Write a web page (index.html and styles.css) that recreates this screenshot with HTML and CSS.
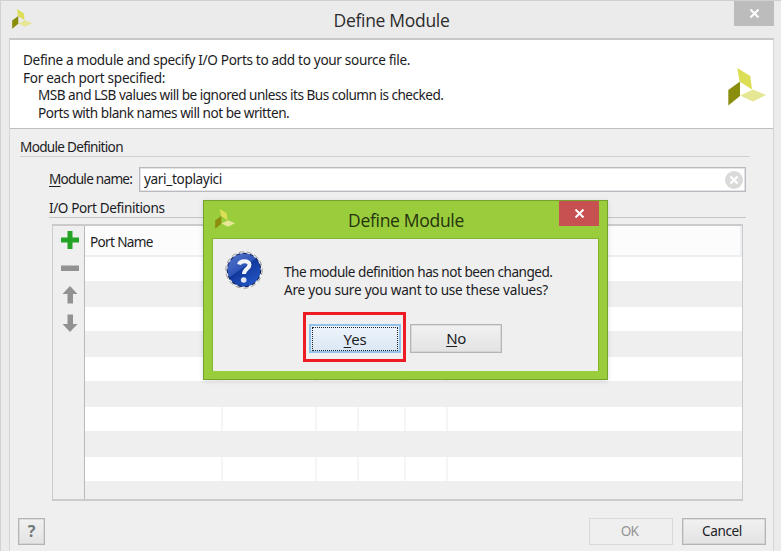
FILE: index.html
```
<!DOCTYPE html>
<html lang="en">
<head>
<meta charset="utf-8">
<title>Define Module</title>
<link rel="stylesheet" href="styles.css">
</head>
<body>
<svg width="0" height="0" class="defs" aria-hidden="true">
  <symbol id="logo" viewBox="0 0 38 38">
    <path fill="#dcdf55" d="M9.300 0 22.300 8 24 21.500 11.500 13.500Z"/>
    <path fill="#8b8d0d" d="M.3 22 12 13.500V28L.3 37.500Z"/>
    <path fill="#e5e794" d="M12 27.500 25 21.500 38 27 25 33.500Z"/>
  </symbol>
</svg>
<div class="window">
  <header class="titlebar">
    <svg class="app-icon"><use href="#logo"/></svg>
    <h1>Define Module</h1>
    <button class="close"><svg viewBox="0 0 11 9"><path d="M1.500.5 9.500 8.500M9.500.5 1.500 8.500"/></svg></button>
  </header>
  <main class="content">
    <section class="intro">
      <div class="intro-text">
        <p class="l1">Define a module and specify I/O Ports to add to your source file.</p>
        <p class="l2">For each port specified:</p>
        <p class="l3 indent">MSB and LSB values will be ignored unless its Bus column is checked.</p>
        <p class="l4 indent">Ports with blank names will not be written.</p>
      </div>
      <svg class="brand"><use href="#logo"/></svg>
    </section>
    <section class="definition">
      <h2>Module Definition</h2>
      <div class="name-row">
        <label><u>M</u>odule name:</label>
        <div class="input"><span>yari_toplayici</span>
          <svg viewBox="0 0 18 18"><circle cx="9" cy="9" r="9" fill="#dadada"/><path d="M5.500 5.500l7 7M12.500 5.500l-7 7" stroke="#fff" stroke-width="2.200"/></svg>
        </div>
      </div>
      <h3>I/O Port Definitions</h3>
      <div class="ports">
        <div class="tools">
          <svg viewBox="0 0 18 18"><path fill="#24a324" d="M6.500 0h5v6.500H18v5h-6.500V18h-5v-6.500H0v-5h6.500Z"/></svg>
          <svg viewBox="0 0 18 18"><path fill="#929292" d="M0 6.500h18v5.500H0Z"/></svg>
          <svg viewBox="0 0 18 18"><path fill="#929292" d="M9 0 16.500 8H12v9.500H6.500V8h-5Z"/></svg>
          <svg viewBox="0 0 18 18"><path fill="#929292" d="M9 18 16.500 10H12V.5H6.500V10h-5Z"/></svg>
        </div>
        <div class="table">
          <div class="thead">Port Name</div>
          <div class="row odd"><i></i><i></i><i></i><i></i><i></i><i></i></div><div class="row"></div>
          <div class="row odd"><i></i><i></i><i></i><i></i><i></i><i></i></div><div class="row"></div>
          <div class="row odd"><i></i><i></i><i></i><i></i><i></i><i></i></div><div class="row"></div>
          <div class="row odd"><i></i><i></i><i></i><i></i><i></i><i></i></div><div class="row"></div>
          <div class="row odd"><i></i><i></i><i></i><i></i><i></i><i></i></div><div class="row"></div>
        </div>
      </div>
    </section>
    <footer class="actions">
      <button class="help">?</button>
      <button class="ok" disabled>OK</button>
      <button class="cancel">Cancel</button>
    </footer>
  </main>
</div>
<div class="dialog">
  <header class="dialog-title">
    <svg class="app-icon"><use href="#logo"/></svg>
    <h1>Define Module</h1>
    <button class="close"><svg viewBox="0 0 11 9"><path d="M1.500.5 9.500 8.500M9.500.5 1.500 8.500"/></svg></button>
  </header>
  <div class="dialog-body">
    <div class="message">
      <svg class="question" viewBox="0 0 38 38">
        <defs><linearGradient id="ball" x1="0" y1="0" x2=".7" y2="1"><stop offset="0" stop-color="#5a78cc"/><stop offset=".5" stop-color="#2e55b8"/><stop offset=".52" stop-color="#11389c"/><stop offset="1" stop-color="#2356c4"/></linearGradient></defs>
        <circle cx="19" cy="19" r="18.200" fill="#f4f4f4" stroke="#999" stroke-width="1" stroke-dasharray="5 3"/>
        <circle cx="19" cy="19" r="16.700" fill="url(#ball)" stroke="#172b66" stroke-width="1.200" stroke-dasharray="4 3"/>
        <path d="M14 13.500c1-4 10.500-4.500 10.500.3 0 4-5.500 4-5.500 9.200" fill="none" stroke="#f3f4fa" stroke-width="4"/>
        <circle cx="18.700" cy="29" r="2.800" fill="#e1e6f5"/>
      </svg>
      <div class="message-text">
        <p class="m1">The module definition has not been changed.</p>
        <p class="m2">Are you sure you want to use these values?</p>
      </div>
    </div>
    <div class="choices">
      <div class="highlight"><button class="yes"><span><u>Y</u>es</span></button></div>
      <button class="no"><u>N</u>o</button>
    </div>
  </div>
</div>
</body>
</html>
```
FILE: styles.css
```
* { box-sizing: border-box; }
body {
  margin: 0;
  width: 781px;
  height: 551px;
  overflow: hidden;
  font: 13.6px/17.5px "Noto Sans", sans-serif;
  color: #1c1c24;
}
.defs { position: absolute; }
p, h1, h2, h3 { margin: 0; font-weight: 400; font-size: inherit; }
button { padding: 0; font: inherit; color: inherit; border-radius: 0; }
svg { display: block; flex: none; }
u { text-decoration-thickness: 1px; text-underline-offset: 2px; text-decoration-skip-ink: none; }

.window {
  height: 551px;
  padding: 0 7px 0 8px;
  background: #ebebeb;
  border-top: 1px solid #d0d0d0;
  border-left: 1px solid #d0d0d0;
}
.titlebar { display: flex; height: 37px; }
.titlebar .app-icon { width: 20px; height: 20px; margin: 8px 0 0 3px; }
h1 {
  flex: 1;
  text-align: center;
  font: 17.5px/38px "Open Sans", sans-serif;
  letter-spacing: -0.3px;
  color: #2b2b2b;
}
.titlebar h1 { padding-left: 17px; }
.close {
  width: 40px;
  height: 25px;
  border: 0;
  background: #bcbcbc;
  display: grid;
  place-items: center;
}
.close svg { width: 11px; height: 9px; stroke: #fff; stroke-width: 2; }

.content {
  height: 513px;
  border: 1px solid #d6d6d6;
  border-top: 2px solid #c8c8c8;
  border-bottom: 0;
  background: #efefef;
}
.intro {
  display: flex;
  justify-content: space-between;
  height: 89px;
  padding: 11px 7px 0 13px;
  background: #fff;
  border-bottom: 1px solid #bebebe;
}
.brand { width: 38px; height: 38px; margin-top: 17px; }
.indent { padding-left: 15px; }
.l1 { letter-spacing: -0.33px; }
.l2 { letter-spacing: -0.3px; }
.l3 { letter-spacing: -0.51px; }
.l4 { letter-spacing: -0.48px; }

.definition { padding: 9px 23px 0 11px; }
h2 {
  height: 19px;
  margin-left: -1px;
  letter-spacing: -0.7px;
  border-bottom: 1px solid #d0d0d0;
}
.name-row { display: flex; height: 25px; margin: 10px 4px 0 28px; line-height: 24px; }
.name-row label { width: 90px; letter-spacing: -0.74px; }
.input {
  flex: 1;
  display: flex;
  align-items: center;
  justify-content: space-between;
  padding: 0 2px 0 4px;
  border: 1px solid #b9b9bf;
  box-shadow: inset 0 0 0 .5px #c9c9cf;
  background: #fff;
  letter-spacing: -0.35px;
}
.input span { margin-top: -1px; }
.input svg { width: 18px; height: 18px; }
h3 {
  height: 19px;
  margin: 7px 4px 0 28px;
  letter-spacing: -0.4px;
  border-bottom: 1px solid #c4c4c4;
}
.ports {
  display: flex;
  height: 277px;
  margin: 6px 7px 0 31px;
  border: 2px solid #cbcbcb;
  border-left-width: 1px;
  border-right-width: 1px;
}
.tools {
  width: 32px;
  padding: 5px 0 0 8px;
  display: flex;
  flex-direction: column;
  gap: 9.500px;
  border-right: 1px solid #b9b9b9;
}
.tools svg { width: 18px; height: 18px; }
.table { flex: 1; overflow: hidden; background: #efefef; }
.thead {
  height: 31px;
  padding: 0 5px;
  line-height: 31px;
  letter-spacing: -0.67px;
  background: #fcfcfc;
  border-right: 2px solid #ebeff4;
  border-bottom: 2px solid #ebeff4;
}
.row { height: 26px; }
.row.odd {
  height: 24px;
  display: grid;
  grid-template-columns: 138px 94px 42px 47px 42px 1fr;
  background: #fff;
}
.row i { border-right: 2px solid #f5f5f5; }
.row i:last-child { border: 0; }

.actions { display: flex; padding: 17px 7px 0 8px; }
.actions button {
  height: 27px;
  border: 1px solid #b4b4b4;
  box-shadow: inset 0 0 0 .5px #c8c8c8;
  background: linear-gradient(#f1f1f1, #e3e3e3);
  line-height: 24px;
  padding-bottom: 1px;
}
.actions .help { width: 27px; margin-right: auto; font-weight: 700; font-size: 16px; color: #6d7b7b; }
.actions .ok {
  width: 84px;
  margin-right: 9px;
  padding-right: 3px;
  letter-spacing: -0.7px;
  color: #969696;
  border-color: #d9d9d9;
  box-shadow: none;
  background: #efefef;
}
.actions .cancel { width: 84px; padding-right: 4px; letter-spacing: -0.4px; }

.dialog {
  position: absolute;
  left: 203px;
  top: 200px;
  width: 405px;
  height: 180px;
  padding: 0 8px;
  border: 1px solid #76a12c;
  background: #9acd3c;
  box-shadow: 0 1px 5px rgba(0, 0, 0, .13);
}
.dialog-title { display: flex; height: 37px; }
.dialog-title .app-icon { width: 20px; height: 20px; margin: 8px 0 0 3px; }
.dialog-title h1 { padding-left: 18px; color: #26330f; }
.dialog-title .close { background: #c75050; }
.dialog-body {
  height: 133px;
  border: 1px solid #83b52e;
  border-bottom: 0;
  background: #efefef;
}
.message { display: flex; padding: 12px 0 0 12px; }
.question { width: 38px; height: 38px; }
.message-text { margin: 12px 0 0 21px; }
.m1 { letter-spacing: -0.5px; }
.m2 { letter-spacing: -0.24px; }
.choices { display: flex; align-items: center; margin: 14px 0 0 90px; font-size: 15px; }
.highlight {
  width: 103px;
  height: 50px;
  padding: 9px 3px 0 3px;
  border: 3px solid #ed1c24;
}
.yes {
  display: block;
  width: 92px;
  height: 29px;
  padding: 1px;
  border: 2px solid #92c1ea;
  background: linear-gradient(#eef3fa, #dbe8f4);
}
.yes span {
  display: block;
  height: 24px;
  line-height: 22px;
  border: 1px dotted #222;
  letter-spacing: -0.2px;
}
.no {
  width: 92px;
  height: 29px;
  margin: 3px 0 0 4px;
  border: 1px solid #b4b4b4;
  box-shadow: inset 0 0 0 .5px #c8c8c8;
  background: linear-gradient(#f1f1f1, #e3e3e3);
  letter-spacing: -0.4px;
}
```
